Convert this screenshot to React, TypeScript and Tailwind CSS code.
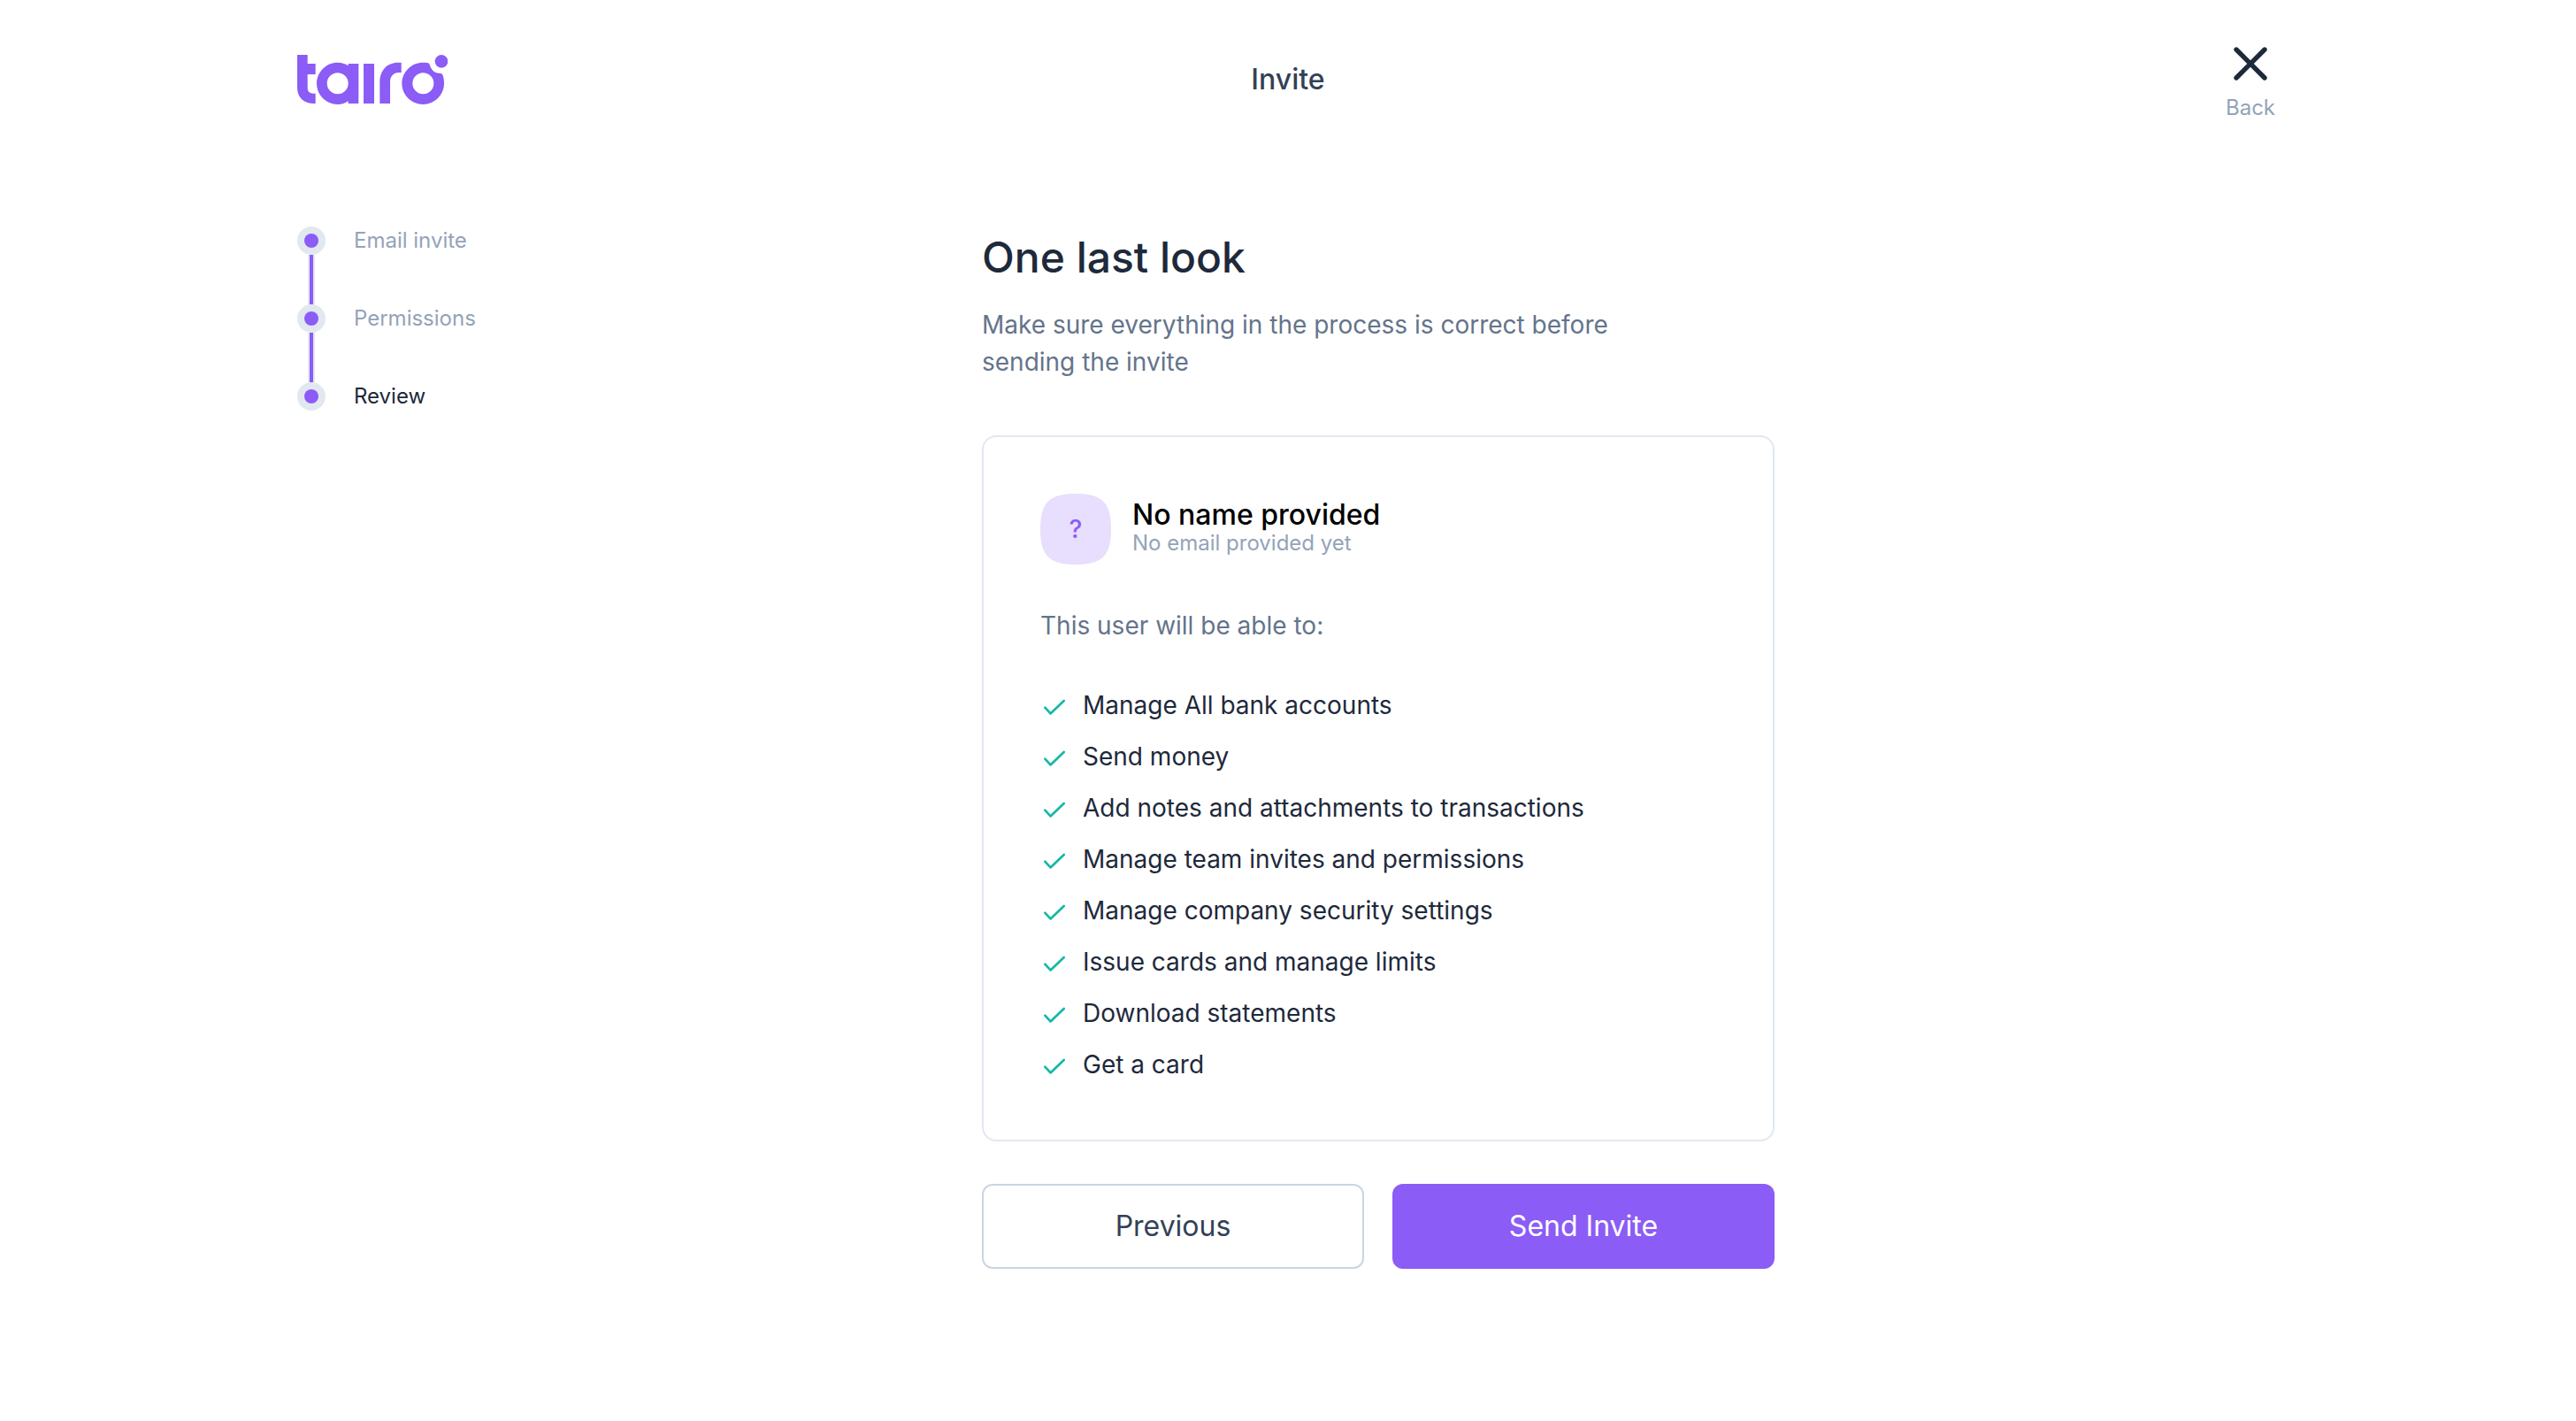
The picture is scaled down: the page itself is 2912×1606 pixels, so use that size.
import { X } from 'lucide-react';

const steps = [
  { label: 'Email invite', current: false },
  { label: 'Permissions', current: false },
  { label: 'Review', current: true },
];

const abilities = [
  'Manage All bank accounts',
  'Send money',
  'Add notes and attachments to transactions',
  'Manage team invites and permissions',
  'Manage company security settings',
  'Issue cards and manage limits',
  'Download statements',
  'Get a card',
];

function Logo() {
  return (
    <svg viewBox="48 36 510 168" className="h-14 w-[170px] text-[#8b5cf6]" fill="currentColor" role="img" aria-label="tairo">
      <path d="M48 36H83V66H110V102H83V148C83 161 91 167 103 167H110V201H105C70 201 48 180 48 146Z" />
      <path
        fillRule="evenodd"
        d="M185 62C199 62 211 66 221 73V66H256V201H221V193C211 200 199 204 185 204C146 204 114 172 114 133C114 94 146 62 185 62ZM185 97A36 36 0 1 0 185 169A36 36 0 1 0 185 97Z"
      />
      <path d="M273 66H309V201H273Z" />
      <path d="M328 201V128C328 90 352 62 390 62H401V96H393C374 96 363 109 363 128V201Z" />
      <path
        fillRule="evenodd"
        d="M475 62C482 62 486 62 490 63C496 64 497 69 499 75C504 88 515 98 528 98C535 98 540 99 542 106C545 115 546 124 546 133C546 172 514 204 475 204C435 204 403 172 403 133C403 94 435 62 475 62ZM475 97A36 36 0 1 0 475 169A36 36 0 1 0 475 97Z"
      />
      <circle cx="537" cy="58" r="22" />
    </svg>
  );
}

function CheckIcon() {
  return (
    <svg
      viewBox="0 0 32 32"
      className="size-8 shrink-0 text-[#14b8a6]"
      fill="none"
      stroke="currentColor"
      strokeWidth="2.7"
      strokeLinecap="round"
      strokeLinejoin="round"
      aria-hidden="true"
    >
      <path d="M5.3 18.7L11.5 25.4L26.7 11" />
    </svg>
  );
}

function Steps() {
  return (
    <ol className="w-[204px] shrink-0 pt-4">
      {steps.map((step, i) => (
        <li key={step.label} className="flex gap-8">
          <div className="flex w-8 flex-col items-center">
            <span className="flex size-8 items-center justify-center rounded-full bg-[#e2e8f0]">
              <span className="size-4 rounded-full bg-[#8b5cf6]" />
            </span>
            {i < steps.length - 1 && (
              <span className="flex h-14 w-2 justify-center bg-[#e2e8f0]">
                <span className="w-1 bg-[#8b5cf6]" />
              </span>
            )}
          </div>
          <span className={step.current ? 'text-2xl text-[#1e293b]' : 'text-2xl text-[#94a3b8]'}>{step.label}</span>
        </li>
      ))}
    </ol>
  );
}

export default function App() {
  return (
    <div className="min-h-screen bg-white font-['Inter',sans-serif]">
      <div className="mx-auto max-w-[2304px] px-8">
        <header className="grid h-[180px] grid-cols-3 items-center">
          <a href="#" aria-label="Home" className="justify-self-start">
            <Logo />
          </a>
          <h1 className="text-center text-[32px] leading-10 font-medium text-[#334155]">Invite</h1>
          <button type="button" className="flex flex-col items-center justify-self-end">
            <X size={64} strokeWidth={2} className="text-[#1e293b]" />
            <span className="text-2xl leading-9 text-[#94a3b8]">Back</span>
          </button>
        </header>

        <div className="flex items-start pt-[60px]">
          <Steps />
          <main className="mx-auto w-full max-w-4xl pt-5">
            <h2 className="text-5xl leading-[62px] font-medium text-[#1e293b]">One last look</h2>
            <p className="mt-6 max-w-3xl text-[28px] leading-[42px] text-[#64748b]">
              Make sure everything in the process is correct before sending the invite
            </p>

            <section className="mt-[62px] rounded-2xl border-2 border-[#e2e8f0] p-16">
              <div className="flex items-center gap-6">
                <div className="flex size-20 items-center justify-center bg-[#e8defd] text-[28px] font-medium text-[#8b5cf6] [clip-path:path('M0_40C0_10_10_0_40_0S80_10_80_40_70_80_40_80_0_70_0_40')]">
                  ?
                </div>
                <div>
                  <h3 className="text-[32px] leading-8 font-medium text-black">No name provided</h3>
                  <p className="text-2xl text-[#94a3b8]">No email provided yet</p>
                </div>
              </div>
              <p className="mt-12 text-[28px] leading-[42px] text-[#64748b]">This user will be able to:</p>
              <ul className="mt-12 flex flex-col gap-4">
                {abilities.map((ability) => (
                  <li key={ability} className="flex items-center gap-4 text-[28px] leading-[42px] text-[#1e293b]">
                    <CheckIcon />
                    {ability}
                  </li>
                ))}
              </ul>
            </section>

            <div className="mt-12 grid grid-cols-2 gap-8">
              <button type="button" className="h-24 rounded-xl border-2 border-[#cbd5e1] bg-white text-[32px] text-[#334155]">
                Previous
              </button>
              <button type="button" className="h-24 rounded-xl bg-[#8b5cf6] text-[32px] text-white">
                Send Invite
              </button>
            </div>
          </main>
        </div>
      </div>
    </div>
  );
}
